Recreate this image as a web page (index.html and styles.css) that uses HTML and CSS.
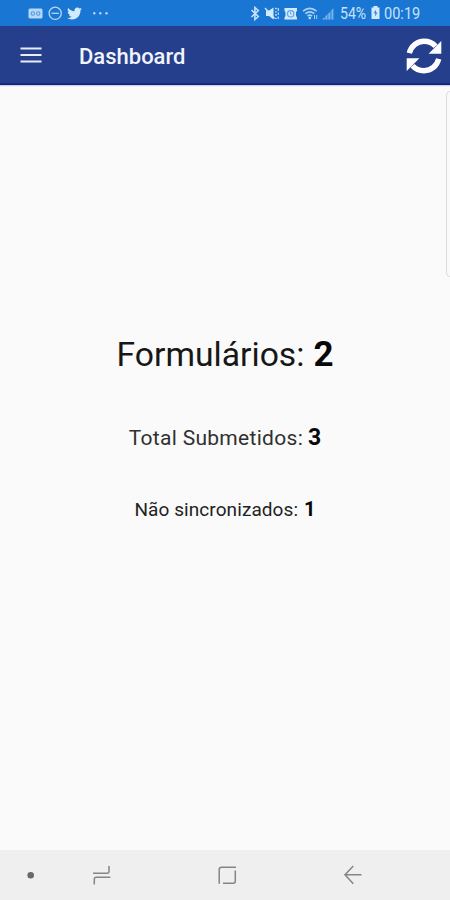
FILE: index.html
```
<!DOCTYPE html>
<html lang="pt">
<head>
<meta charset="utf-8">
<title>Dashboard</title>
<link rel="stylesheet" href="styles.css">
</head>
<body>
<div class="screen">
  <div class="status">
    <svg class="notifications" width="84" height="26" viewBox="28 0 84 26">
      <rect x="28.5" y="8.500" width="14" height="10" rx="1.5" fill="#b5d8f8"/>
      <g fill="none" stroke="#4f9be3" stroke-width="1.100"><circle cx="32.800" cy="13.500" r="1.700"/><circle cx="38.200" cy="13.500" r="1.700"/></g>
      <g fill="none" stroke="#b5d8f8" stroke-width="1.300"><circle cx="55.200" cy="13.300" r="6.100"/><path d="M51.500 13.300h7.400"/></g>
      <path transform="translate(67.3 5.8) scale(.62)" fill="#d2eafd" d="M23.6 4.9a9.7 9.7 0 0 1-2.8.8 4.9 4.9 0 0 0 2.1-2.7c-1 .6-2 1-3.1 1.2a4.9 4.9 0 0 0-8.3 4.5C7.4 8.5 3.8 6.5 1.4 3.5a4.9 4.9 0 0 0 1.5 6.5c-.8 0-1.600-.2-2.200-.6v.1c0 2.400 1.700 4.300 3.900 4.800-.7.200-1.500.2-2.200.1a4.900 4.900 0 0 0 4.600 3.400A9.900 9.900 0 0 1-.2 19.800a13.900 13.900 0 0 0 7.500 2.200c9.100 0 14.300-7.700 13.900-14.600a9.900 9.900 0 0 0 2.400-2.500z"/>
      <g fill="#b5d8f8"><circle cx="94.300" cy="13.200" r="1.200"/><circle cx="100.300" cy="13.200" r="1.200"/><circle cx="106.500" cy="13.200" r="1.200"/></g>
    </svg>
    <svg class="signals" width="86" height="26" viewBox="250 0 86 26">
      <path d="M251.500 10l6.800 6.500-3.400 3V7.500l3.400 3-6.800 6.500" fill="none" stroke="#c6e2fb" stroke-width="1.600"/>
      <path d="M266 10.500h3l4.500-3v12l-4.500-3.500h-3z" fill="#d2eafd"/>
      <path d="M265 8l9.500 10.500" stroke="#d2eafd" stroke-width="1.300"/>
      <path d="M275 8.500h1.800M275 11.800h1.800M275 15h1.800M275 18.300h1.800M278.300 8v3M278.300 12.500v2.500M278.300 16.500v2.500" fill="none" stroke="#b5d8f8" stroke-width="1.300"/>
      <path d="M284.500 8h12.500v3l-1 1v4l1 1.500v2h-12.500v-2l1-1.500v-4l-1-1z" fill="#d2eafd"/>
      <circle cx="290.700" cy="13.800" r="3.200" fill="none" stroke="#5aa3e8" stroke-width="1.200"/>
      <path d="M290.500 12v2h1.500" fill="none" stroke="#5aa3e8" stroke-width=".8"/>
      <g fill="none" stroke="#a8d1f6" stroke-width="1.600"><path d="M303 11.200q6.700-5.600 13.600 0M305.300 13.700q4.600-3.600 9 0M307.500 16q2.300-1.700 4.600 0"/></g>
      <circle cx="309.800" cy="18" r="1.300" fill="#c6e2fb"/>
      <path d="M314.500 15v4M316.700 15v4" stroke="#a8d1f6"/>
      <path d="M322.500 19.500L333.500 8v11.500z" fill="#4995e0"/>
      <path d="M323.500 18v1.500M326.300 15.500v4M329.200 13v6.500M332.500 9.500v10" stroke="#78b4ec" stroke-width="1.400"/>
    </svg>
    <span class="percent">54%</span>
    <svg class="battery" width="9" height="14" viewBox="0 0 9 14"><path d="M2.500 0h4v1.500h2V13H.5V1.500h2z" fill="#d2eafd"/><path d="M5 3.500L2.700 7.300h1.600L4 10.500l2.500-4H4.800z" fill="#327fca"/></svg>
    <span class="clock">00:19</span>
  </div>
  <header class="bar">
    <svg class="menu" width="22" height="16" viewBox="0 0 22 16"><path d="M.5 1.500h21M.5 8h21M.5 14.500h21" stroke="#e7ebfa" stroke-width="2"/></svg>
    <h1>Dashboard</h1>
    <svg class="sync" width="36" height="36" viewBox="0 0 36 36">
      <g fill="none" stroke="#fff" stroke-width="5.400"><path d="M3.300 15.200C5 8 11 3.300 18 3.300c4.700 0 8.800 1.900 11.500 5"/><path d="M32.700 20.800C31 28 25 32.700 18 32.700c-4.700 0-8.800-1.900-11.500-5"/></g>
      <path d="M35.300 3v12.700H22.600zM.7 33V20.300h12.700z" fill="#fff"/>
    </svg>
  </header>
  <main>
    <p class="forms"><span>Formulários:</span><b>2</b></p>
    <p class="total"><span>Total Submetidos:</span><b>3</b></p>
    <p class="pending"><span>Não sincronizados:</span><b>1</b></p>
    <div class="edge"></div>
  </main>
  <nav>
    <svg width="450" height="50" viewBox="0 850 450 50" fill="none" stroke="#858585" stroke-width="1.500">
      <circle cx="30.700" cy="875.200" r="3.300" fill="#686868" stroke="none"/>
      <path d="M93 873.300h14q2 0 2-2v-5.300M110.300 877.200H96.300q-2 0-2 2v5.300"/>
      <path d="M236 867.200h-14.500q-2.300 0-2.300 2.300v14.300M223 883.300h10.300q2 0 2-2V870.500"/>
      <path d="M361.500 874.700h-16M353.300 866l-8.300 8.700 8.300 9"/>
    </svg>
  </nav>
</div>
</body>
</html>
```
FILE: styles.css
```
* { box-sizing: border-box; }
body { margin: 0; font-family: Roboto, "Liberation Sans", sans-serif; }
svg { display: block; flex: none; }
.screen { width: 450px; height: 900px; display: flex; flex-direction: column; background: #fafafa; overflow: hidden; }
.status { height: 26px; flex: none; display: flex; align-items: center; padding-left: 28px; background: #1976d2; color: #c6e2fb; font-size: 16px; line-height: 26px; white-space: nowrap; }
.signals { margin-left: 138px; }
.percent, .clock { display: block; height: 26px; padding-top: 1px; transform-origin: left; }
.percent { width: 26px; margin-left: 4px; transform: scaleX(.88); }
.battery { margin-left: 5px; }
.clock { margin-left: 4px; transform: scaleX(.91); }
.bar { height: 59px; flex: none; display: flex; align-items: center; padding: 0 8px 0 20px; background: #263f8c; border-bottom: 2px solid #102b7c; box-shadow: 0 1px 1px #cbd0e4; }
.menu { margin-top: 1px; }
h1 { margin: 4px 0 0 37px; flex: 1; color: #f2f4fc; font-size: 22px; line-height: 28px; font-weight: 500; }
.sync { margin-top: 2px; }
main { position: relative; flex: 1; display: flex; flex-direction: column; align-items: center; padding-top: 250px; color: #171717; }
p { margin: 0; display: flex; align-items: baseline; white-space: nowrap; }
.forms { font-size: 33.700px; line-height: 40px; gap: 9px; }
.total { margin-top: 47px; font-size: 21px; line-height: 32px; gap: 5px; color: #303030; }
.total span { letter-spacing: .3px; }
.pending { margin-top: 41px; font-size: 19px; line-height: 28px; gap: 6px; color: #222; }
.pending span { letter-spacing: .08px; }
b { font-weight: 700; color: #080808; }
.forms b { font-size: 35px; }
.total b { font-size: 23px; }
.pending b { font-size: 20px; }
.edge { position: absolute; right: -8px; top: 6px; width: 12px; height: 186px; border: 1px solid #dedede; border-radius: 4px; background: #fafafa; }
nav { height: 50px; flex: none; background: #efefef; }
```
